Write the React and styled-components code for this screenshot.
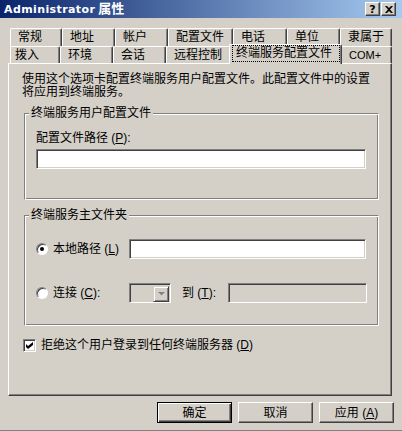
import React from 'react';
import styled, { createGlobalStyle } from 'styled-components';

const GlobalStyle = createGlobalStyle`
  html, body {
    margin: 0;
    padding: 0;
    background: #d4d0c8;
  }
  body {
    font-family: "Liberation Sans", "Noto Sans CJK SC", sans-serif;
    font-size: 12px;
    color: #000;
  }
`;

const Window = styled.div`
  width: 402px;
  height: 431px;
  box-sizing: border-box;
  background: #d4d0c8;
  border-bottom: 1px solid #808080;
  display: flex;
  flex-direction: column;
  overflow: hidden;
`;

const TitleBar = styled.div`
  flex: none;
  height: 18px;
  display: flex;
  align-items: center;
  padding: 0 6px 0 4px;
  background: linear-gradient(to right, #0a246a, #a6caf0);
`;

const TitleText = styled.div`
  flex: 1;
  color: #fff;
  font-family: "DejaVu Sans", "Noto Sans CJK SC", sans-serif;
  font-weight: bold;
  font-size: 11px;
  letter-spacing: 0.4px;
  line-height: 16px;
  white-space: nowrap;
`;

const TitleCjk = styled.span`
  font-family: "Liberation Sans", "Noto Sans CJK SC", sans-serif;
  font-size: 13px;
  letter-spacing: 0;
  margin-left: 3px;
`;

const CaptionButtons = styled.div`
  display: flex;
  gap: 1px;
`;

const CaptionButton = styled.div`
  box-sizing: border-box;
  width: 15px;
  height: 14px;
  background: #d4d0c8;
  border: 1px solid;
  border-color: #fff #404040 #404040 #fff;
  box-shadow: inset -1px -1px #808080;
  display: flex;
  align-items: center;
  justify-content: center;
  font-family: "DejaVu Sans", sans-serif;
  font-weight: bold;
  font-size: 11px;
  line-height: 11px;
  color: #000;
`;

const Tabs = styled.div`
  margin-top: 10px;
  display: flex;
  flex-direction: column;
`;

const TabRow = styled.div`
  display: flex;
  align-items: flex-start;
  height: ${p => p.$h}px;
  margin-left: 10px;
`;

const Tab = styled.div`
  box-sizing: border-box;
  flex: none;
  width: ${p => p.$w}px;
  height: ${p => p.$h}px;
  background: #d4d0c8;
  border-top: 1px solid #fff;
  border-left: 1px solid #fff;
  border-right: 1px solid #404040;
  border-radius: 2px 2px 0 0;
  box-shadow: inset -1px 0 #808080;
  padding-left: ${p => p.$pl ?? 7}px;
  display: flex;
  align-items: center;
  line-height: 13px;
  white-space: nowrap;
`;

const ActiveTab = styled(Tab)`
  position: relative;
  z-index: 2;
  width: ${p => p.$w + 3}px;
  height: 20px;
  margin: -2px -1px 0 -2px;
  padding: 0 1px 2px 2px;
  align-items: stretch;
`;

const FocusBox = styled.span`
  flex: 1;
  border: 1px dotted #000;
  padding-left: 3px;
  display: flex;
  align-items: center;
`;

const Latin = styled.span`
  font-size: 11px;
`;

const Panel = styled.div`
  box-sizing: border-box;
  width: 384px;
  height: 333px;
  margin-left: 8px;
  border: 1px solid;
  border-color: #fff #404040 #404040 #fff;
  box-shadow: inset -1px -1px #808080;
  padding: 9px 12px 0 13px;
  display: flex;
  flex-direction: column;
`;

const Description = styled.div`
  line-height: 13px;
`;

const GroupBox = styled.div`
  position: relative;
  box-sizing: border-box;
  height: ${p => p.$h}px;
  margin: ${p => p.$mt}px 0 0 2px;
  border: 1px solid;
  border-color: #808080 #fff #fff #808080;
  box-shadow: inset 1px 1px #fff, inset -1px -1px #808080;
  padding: ${p => p.$pt}px 12px 0 11px;
  display: flex;
  flex-direction: column;
`;

const GroupTitle = styled.div`
  position: absolute;
  top: -8px;
  left: 4px;
  padding: 0 2px;
  background: #d4d0c8;
  line-height: 14px;
`;

const FieldLabel = styled.div`
  line-height: 14px;
`;

const TextBox = styled.div`
  box-sizing: border-box;
  flex: none;
  width: ${p => p.$w}px;
  height: 20px;
  margin-top: ${p => p.$mt ?? 0}px;
  background: ${p => (p.$disabled ? '#d4d0c8' : '#fff')};
  border: 1px solid;
  border-color: #808080 #fff #fff #808080;
  box-shadow: inset 1px 1px #404040, inset -1px -1px #d4d0c8;
`;

const OptionRow = styled.div`
  display: flex;
  align-items: center;
  height: 20px;
  margin-top: ${p => p.$mt ?? 0}px;
`;

const RadioLabel = styled.label`
  flex: none;
  width: 93px;
  display: flex;
  align-items: center;
  gap: 5px;
  line-height: 14px;
`;

const Radio = styled.span`
  flex: none;
  box-sizing: border-box;
  width: 12px;
  height: 12px;
  border-radius: 50%;
  border: 1px solid;
  border-color: #808080 #fff #fff #808080;
  background: #fff;
  box-shadow: inset 1px 1px #404040;
  display: flex;
  align-items: center;
  justify-content: center;

  &::after {
    content: '';
    display: ${p => (p.$checked ? 'block' : 'none')};
    width: 4px;
    height: 4px;
    border-radius: 50%;
    background: #000;
  }
`;

const ComboBox = styled.div`
  box-sizing: border-box;
  flex: none;
  width: 42px;
  height: 20px;
  background: #d4d0c8;
  border: 1px solid;
  border-color: #808080 #fff #fff #808080;
  box-shadow: inset 1px 1px #404040, inset -1px -1px #d4d0c8;
  padding: 1px 1px 1px 0;
  display: flex;
  justify-content: flex-end;
`;

const DropButton = styled.div`
  box-sizing: border-box;
  width: 16px;
  height: 16px;
  margin-top: 1px;
  border: 1px solid;
  border-color: #d4d0c8 #404040 #404040 #d4d0c8;
  box-shadow: inset 1px 1px #fff, inset -1px -1px #808080;
  display: flex;
  align-items: center;
  justify-content: center;
`;

const ToLabel = styled.span`
  flex: none;
  width: 46px;
  margin-left: 11px;
  line-height: 14px;
`;

const CheckRow = styled.label`
  display: flex;
  align-items: center;
  gap: 5px;
  margin: 12px 0 0 1px;
  line-height: 14px;
`;

const CheckBox = styled.span`
  flex: none;
  box-sizing: border-box;
  width: 13px;
  height: 13px;
  background: #fff;
  border: 1px solid;
  border-color: #808080 #fff #fff #808080;
  box-shadow: inset 1px 1px #404040, inset -1px -1px #d4d0c8;
  padding: 2px 0 0 2px;
  display: flex;
`;

const Mn = styled.u`
  text-decoration-thickness: 1px;
  text-underline-offset: 1px;
`;

const ButtonRow = styled.div`
  display: flex;
  justify-content: flex-end;
  gap: 6px;
  margin-top: 6px;
  padding-right: 8px;
`;

const Button = styled.div`
  box-sizing: border-box;
  width: 75px;
  height: 21px;
  background: #d4d0c8;
  display: flex;
  align-items: center;
  justify-content: center;
  line-height: 14px;
  border: 1px solid;
  border-color: ${p => (p.$default ? '#000' : '#fff #404040 #404040 #fff')};
  box-shadow: ${p =>
    p.$default
      ? 'inset 1px 1px #fff, inset -1px -1px #404040, inset -2px -2px #808080'
      : 'inset -1px -1px #808080'};
`;

const topTabs = [
  ['常规', 52],
  ['地址', 53],
  ['帐户', 53],
  ['配置文件', 65],
  ['电话', 54],
  ['单位', 53],
  ['隶属于', 52],
];

const bottomTabs = [
  ['拨入', 50],
  ['环境', 53],
  ['会话', 53],
  ['远程控制', 65],
  ['终端服务配置文件', 110, true],
  ['COM+', 51],
];

export default function App() {
  return (
    <>
      <GlobalStyle />
      <Window>
        <TitleBar>
          <TitleText>
            Administrator<TitleCjk>属性</TitleCjk>
          </TitleText>
          <CaptionButtons>
            <CaptionButton>?</CaptionButton>
            <CaptionButton>
              <svg width="8" height="7" viewBox="0 0 8 7">
                <path d="M0 0h2l2 2 2-2h2L5 3.5 8 7H6L4 5 2 7H0l3-3.5z" fill="#000" />
              </svg>
            </CaptionButton>
          </CaptionButtons>
        </TitleBar>

        <Tabs>
          <TabRow $h={18}>
            {topTabs.map(([label, w]) => (
              <Tab key={label} $w={w} $h={18}>{label}</Tab>
            ))}
          </TabRow>
          <TabRow $h={17}>
            {bottomTabs.map(([label, w, active]) =>
              active ? (
                <ActiveTab key={label} $w={w}>
                  <FocusBox>{label}</FocusBox>
                </ActiveTab>
              ) : (
                <Tab key={label} $w={w} $h={17} $pl={label === '拨入' ? 4 : 7}>
                  {label === 'COM+' ? <Latin>{label}</Latin> : label}
                </Tab>
              )
            )}
          </TabRow>
        </Tabs>

        <Panel>
          <Description>
            使用这个选项卡配置终端服务用户配置文件。此配置文件中的设置
            <br />
            将应用到终端服务。
          </Description>

          <GroupBox $h={87} $mt={14} $pt={17}>
            <GroupTitle>终端服务用户配置文件</GroupTitle>
            <FieldLabel>
              配置文件路径 (<Mn>P</Mn>):
            </FieldLabel>
            <TextBox $w={330} $mt={4} />
          </GroupBox>

          <GroupBox $h={111} $mt={15} $pt={23}>
            <GroupTitle>终端服务主文件夹</GroupTitle>
            <OptionRow>
              <RadioLabel>
                <Radio $checked />
                <span>
                  本地路径 (<Mn>L</Mn>)
                </span>
              </RadioLabel>
              <TextBox $w={237} />
            </OptionRow>
            <OptionRow $mt={24}>
              <RadioLabel>
                <Radio />
                <span>
                  连接 (<Mn>C</Mn>):
                </span>
              </RadioLabel>
              <ComboBox>
                <DropButton>
                  <svg width="7" height="5" viewBox="0 0 7 5">
                    <path d="M1 1h5L3.5 3.5z" fill="#fff" />
                    <path d="M0 0h7L3.5 3.5z" fill="#808080" />
                  </svg>
                </DropButton>
              </ComboBox>
              <ToLabel>
                到 (<Mn>T</Mn>):
              </ToLabel>
              <TextBox $w={139} $disabled />
            </OptionRow>
          </GroupBox>

          <CheckRow>
            <CheckBox>
              <svg width="7" height="7" viewBox="0 0 7 7">
                <path d="M0 2l2 2 5-4v3L2 7 0 5z" fill="#000" />
              </svg>
            </CheckBox>
            <span>
              拒绝这个用户登录到任何终端服务器 (<Mn>D</Mn>)
            </span>
          </CheckRow>
        </Panel>

        <ButtonRow>
          <Button $default>确定</Button>
          <Button>取消</Button>
          <Button>
            应用 (<Mn>A</Mn>)
          </Button>
        </ButtonRow>
      </Window>
    </>
  );
}
